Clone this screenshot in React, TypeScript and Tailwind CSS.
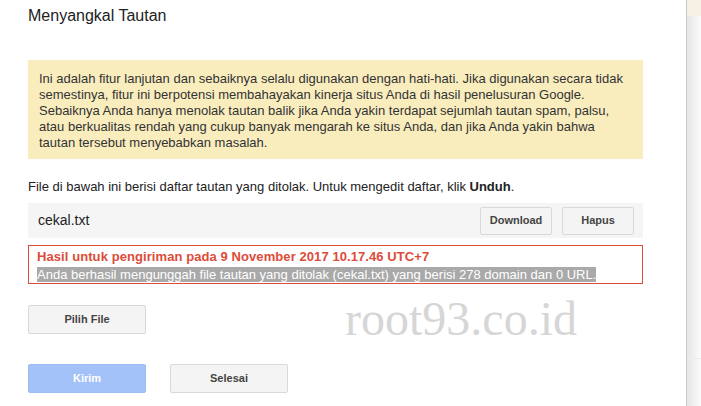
import React from "react";

const btn =
  "h-[28px] rounded-[2px] border border-[#d9d9d9] bg-[#f4f4f4] text-[11px] font-bold text-[#444] flex items-center justify-center";

export default function App() {
  return (
    <div
      className="w-[701px] h-[406px] flex bg-white overflow-hidden relative"
      style={{ fontFamily: '"Liberation Sans", Arial, sans-serif' }}
    >
      <div className="w-[686px] shrink-0 pl-[28px] pt-[6px]">
        <div className="text-[16px] leading-[20px] text-[#222]">Menyangkal Tautan</div>

        <div className="mt-[34px] w-[615px] bg-[#f9edbe] pl-[11px] pt-[11px] pb-[8px] text-[13px] leading-[16px] text-[#333]">
          Ini adalah fitur lanjutan dan sebaiknya selalu digunakan dengan hati-hati. Jika digunakan secara tidak
          <br />
          semestinya, fitur ini berpotensi membahayakan kinerja situs Anda di hasil penelusuran Google.
          <br />
          Sebaiknya Anda hanya menolak tautan balik jika Anda yakin terdapat sejumlah tautan spam, palsu,
          <br />
          atau berkualitas rendah yang cukup banyak mengarah ke situs Anda, dan jika Anda yakin bahwa
          <br />
          tautan tersebut menyebabkan masalah.
        </div>

        <div className="mt-[20px] text-[13px] leading-[16px] text-[#222]">
          File di bawah ini berisi daftar tautan yang ditolak. Untuk mengedit daftar, klik{" "}
          <span className="font-bold">Unduh</span>.
        </div>

        <div className="mt-[8px] w-[615px] h-[35px] bg-[#f5f5f5] flex items-center pl-[10px] pr-[9px]">
          <div className="flex-1 text-[14px] text-[#222]">cekal.txt</div>
          <div className="flex gap-[10px]">
            <div className={`${btn} w-[72px]`}>Download</div>
            <div className={`${btn} w-[72px]`}>Hapus</div>
          </div>
        </div>

        <div className="mt-[7px] w-[615px] h-[39px] border border-[#dd4b39] pl-[8px] pt-[2px] text-[13px] leading-[18px]">
          <div className="font-bold text-[#dd4b39] tracking-[0.08px]">
            Hasil untuk pengiriman pada 9 November 2017 10.17.46 UTC+7
          </div>
          <div>
            <span className="bg-[#a9a9a9] text-white">
              Anda berhasil mengunggah file tautan yang ditolak (cekal.txt) yang berisi 278 domain dan 0 URL.
            </span>
          </div>
        </div>

        <div className={`${btn} mt-[21px] w-[118px] h-[29px]`}>Pilih File</div>

        <div className="mt-[30px] flex gap-[24px]">
          <div className="w-[118px] h-[29px] rounded-[2px] border border-[#9cbcf3] bg-[#a3c3f8] text-[11px] font-bold text-white flex items-center justify-center">
            Kirim
          </div>
          <div className={`${btn} w-[118px] h-[29px]`}>Selesai</div>
        </div>
      </div>

      <div className="flex-1 border-l border-[#c8c8c8] bg-gradient-to-r from-[#e6e6e6] to-[#fbfbfb] flex flex-col">
        <div className="h-[16px] bg-[#f6f1e2]" />
        <div className="h-[342px]" />
        <div className="h-px bg-[#ececec]" />
      </div>

      <div
        className="absolute left-[345px] top-[291px] text-[48px] leading-[56px] text-[#d6d6d6] pointer-events-none"
        style={{ fontFamily: '"Liberation Serif", "Times New Roman", serif' }}
      >
        root93.co.id
      </div>
    </div>
  );
}
